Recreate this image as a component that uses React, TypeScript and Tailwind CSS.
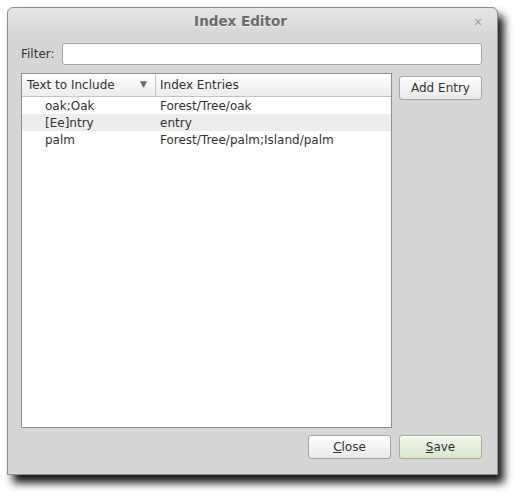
import React from 'react';

const rows = [
  { text: 'oak;Oak', entry: 'Forest/Tree/oak', alt: false },
  { text: '[Ee]ntry', entry: 'entry', alt: true },
  { text: 'palm', entry: 'Forest/Tree/palm;Island/palm', alt: false },
];

function Button({ children, green }: { children: React.ReactNode; green?: boolean }) {
  return (
    <button
      className={
        green
          ? 'h-[24px] w-[83px] rounded-[3px] border border-[#9fb38c] bg-gradient-to-b from-[#f3f8ee] to-[#d9e7cb] text-[12px] text-[#333] shadow-[inset_0_1px_0_#fff]'
          : 'h-[24px] w-[83px] rounded-[3px] border border-[#a6a6a6] bg-gradient-to-b from-[#ffffff] to-[#e9e9e9] text-[12px] text-[#333] shadow-[inset_0_1px_0_#fff]'
      }
    >
      {children}
    </button>
  );
}

export default function App() {
  return (
    <div className="h-[497px] w-[520px] bg-white pl-[7px] pt-[7px] font-['DejaVu_Sans',sans-serif]">
      <div className="flex h-[468px] w-[491px] flex-col rounded-t-[6px] border border-[#8e8e8e] bg-[#d6d6d6] shadow-[6px_8px_9px_rgba(0,0,0,0.9)]">
        <div className="relative flex h-[27px] items-center justify-center rounded-t-[6px] bg-gradient-to-b from-[#e6e6e6] to-[#d6d6d6] pr-[24px]">
          <span className="text-[13.5px] font-bold text-[#6b6b6b] [text-shadow:0_1px_0_#eeeeee]">Index Editor</span>
          <span className="absolute right-[14px] top-[5px] text-[12px] text-[#a3a3a3]">×</span>
        </div>

        <div className="flex flex-1 flex-col pl-[13px] pr-[15px]">
          <div className="mt-[8px] flex items-center gap-[7px]">
            <span className="text-[12px] text-[#333]">Filter:</span>
            <input className="h-[22px] flex-1 rounded-[3px] border border-[#a4a4a4] bg-white outline-none" />
          </div>

          <div className="mt-[8px] flex gap-[7px]">
            <div className="flex h-[355px] w-[371px] flex-col border border-[#8f8f8f] bg-white">
              <div className="flex h-[23px] border-b border-[#c4c4c4] bg-gradient-to-b from-[#ffffff] to-[#ececec] text-[12px] text-[#333]">
                <div className="flex w-[134px] items-center justify-between border-r border-[#c4c4c4] pl-[5px] pr-[8px]">
                  <span>Text to Include</span>
                  <span className="text-[9px] text-[#6a6a6a]">▼</span>
                </div>
                <div className="flex items-center pl-[4px]">Index Entries</div>
              </div>
              {rows.map((r) => (
                <div
                  key={r.text}
                  className={`flex h-[17px] items-center text-[12px] text-[#333] ${r.alt ? 'bg-[#ededed]' : ''}`}
                >
                  <div className="w-[138px] pl-[23px]">{r.text}</div>
                  <div>{r.entry}</div>
                </div>
              ))}
            </div>
            <div className="mt-[2px]">
              <Button>Add Entry</Button>
            </div>
          </div>

          <div className="mt-[7px] flex justify-end gap-[8px]">
            <Button>
              <span className="underline">C</span>lose
            </Button>
            <Button green>
              <span className="underline">S</span>ave
            </Button>
          </div>
        </div>
      </div>
    </div>
  );
}
